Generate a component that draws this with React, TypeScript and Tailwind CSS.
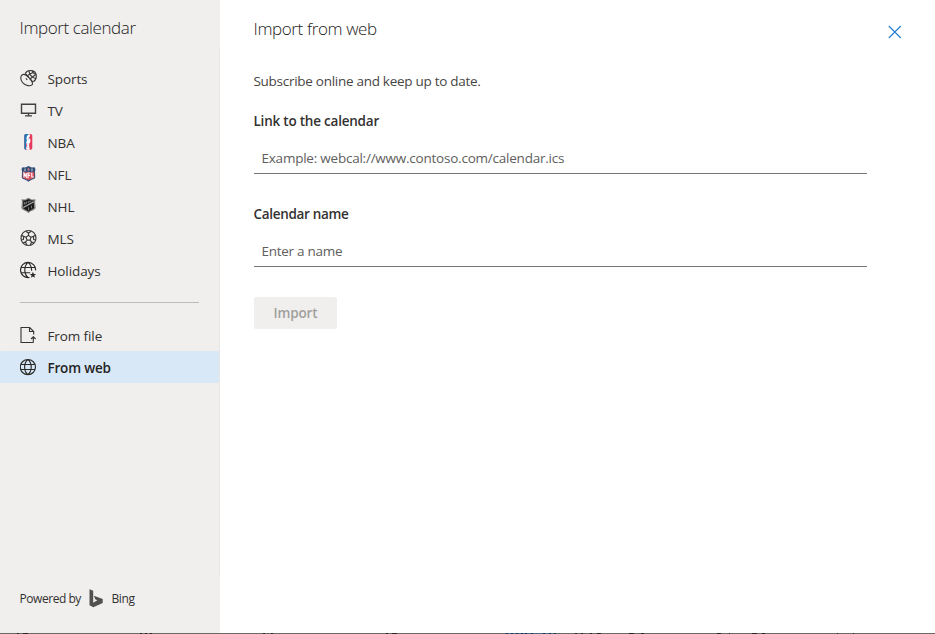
import React from "react";

const stroke = { fill: "none", stroke: "#3b3a37", strokeWidth: 1.15 };

const Svg = ({ children }: { children: React.ReactNode }) => (
  <svg width="18" height="18" viewBox="0 0 18 18" className="block shrink-0">{children}</svg>
);

const SportsIcon = () => (
  <Svg>
    <g {...stroke}>
      <path d="M5.200 4.500C6.400 2.300 8.700 1.300 11 1.500c3.100.3 5.300 2.700 5.300 5.800 0 2.400-1 4.400-3 5.500" />
      <path d="M1.800 6.200C3.500 4.800 6.500 6 9 8.700s4.200 5.900 3 7.200c-1.900 1.500-6.200.9-8.900-1.800S.2 7.900 1.800 6.200z" />
      <path d="M5.200 4.500l3.600 4M12.800 12.800L9.500 9.300M7.200 6.700l7.400-4.200M10 10l6-4.800M9 1.700c.2 3.300 3 6.700 6.800 8M12 1.700c.3 1.500 1.500 2.900 3.700 3.600M5.900 9.400l1.300 1.400" />
    </g>
  </Svg>
);

const TvIcon = () => (
  <Svg>
    <g fill="none" stroke="#44423f" strokeWidth="1.400">
      <path d="M1.500 3.200h14v9h-14zM8.500 12.200v2.600M5 14.900h7" />
    </g>
  </Svg>
);

const NbaIcon = () => (
  <Svg>
    <rect x="4.300" y="1" width="8" height="15.700" rx="1.700" fill="#e63a5c" />
    <path d="M6 1h3L7.500 4l.5 4-2 3 .5 5.700H6a1.700 1.700 0 0 1-1.700-1.700V2.700C4.300 1.700 5 1 6 1z" fill="#2378b5" />
    <path d="M9 1l1.200.9-.7 2-1 1.200 1.800.8v3l-1 1.600-.2 2 .6 4.300H6.900l-.8-1 .8-3.500-.7-3.500L7 7.600l-.6-1.800L7 3z" fill="#fff" />
    <path d="M8.700 4.500l-1 3M8 10l-.4 5" stroke="#a8c7dd" strokeWidth=".6" />
  </Svg>
);

const NflIcon = () => (
  <Svg>
    <path d="M2.500 2.200l2.800.4L8.500.9l3.200 1.700 2.800-.4 1 1.900-.5 2.200.2 6.300c0 1.500-3.900 2-6.700 4.100-2.800-2.100-6.700-2.600-6.700-4.100L2 6.300l-.5-2.200z" fill="#344d76" />
    <path d="M2.800 7.200h11.400v5c-.8 1.300-4 1.600-5.700 3.100-1.700-1.500-4.900-1.800-5.700-3.100z" fill="#dc5060" />
    <path d="M4 12.500V8.200l2.300 3.600V8M8 13.300V8h2.300M8 10.400h2M11.800 7.800v4.200h2" fill="none" stroke="#fff" strokeWidth="1.100" />
    <path d="M8.500 2.500l1 1.300.2 1.500-1.200 1-1.200-1 .2-1.500z" fill="#b07580" />
    <path d="M4 4.200h2M4 5.800h2M11 4.200h2M11 5.800h2" stroke="#d7dce6" strokeWidth=".9" strokeDasharray=".8 .5" />
  </Svg>
);

const NhlIcon = () => (
  <Svg>
    <path d="M1.500 2.200l3.500.2L8.500.8 12 2.400l3.500-.2-.4 3.100.6 5.500c-.2 2.300-5 2.900-7.200 5.500-2.200-2.600-7-3.200-7.200-5.500l.6-5.500z" fill="#858585" />
    <path d="M3 3.400l2.400.1 3.100-1.400 3.100 1.400 2.500-.1-.4 2 .4 5c-.2 1.500-3.700 2.300-5.600 4.200-1.900-1.900-5.400-2.700-5.600-4.200l.4-5z" fill="#1b1b1b" />
    <path d="M3.300 10.500l10.500-5.700" stroke="#b3b3b3" strokeWidth="1.200" />
    <path d="M4.600 5v2.700M4.600 6.500l1.700-.7M6.500 4.500v2.200M8.300 4v2M8.300 5.200l1.800-.7M10.300 3.500V5M8.600 10.200v3M11.500 8.500v2.800" stroke="#999" strokeWidth=".7" />
  </Svg>
);

const MlsIcon = () => (
  <Svg>
    <g {...stroke}>
      <circle cx="8.500" cy="9" r="7.500" />
      <path d="M8.500 6.400l2.500 1.800-.9 2.900H7L6 8.200zM8.500 6.400V4M11 8.200l2.400-.8M10.100 11.100l1.500 2.100M7 11.100l-1.500 2.100M6 8.200l-2.400-.8" />
      <path d="M5.700 2.300L8.500 4l2.800-1.700M15.500 6.300l-2.100 1.100.3 3.200 2.300.5M13.800 13.600l-2.200-.4-1.500 3M7 16.200l-1.500-3-2.300.4M1.100 11l2.300-.5.200-3.100-2.100-1.100" />
    </g>
  </Svg>
);

const GlobeIcon = ({ star = false }: { star?: boolean }) => (
  <Svg>
    <g fill="none" stroke="#292928" strokeWidth="1.150">
      {star ? (
        <path d="M9.500 16.500C4.500 17.200.5 13.500.5 9a7.600 7.600 0 0 1 7.600-7.600c4.500 0 7.900 3.700 7.500 8M8.100 1.400C3.700 5 3.700 13 8.100 16.600M8.100 1.400c2.500 2.200 3.600 5 3.500 8.400M1.200 6.500h13.900M1.200 11.700h9" />
      ) : (
        <path d="M7.900 1.500a7.600 7.600 0 1 0 0 15.200 7.600 7.600 0 0 0 0-15.200zM7.900 1.500c-4.400 3.500-4.400 11.700 0 15.200M7.900 1.500c4.400 3.500 4.400 11.700 0 15.200M1 6.500h13.800M1 11.500h13.800" />
      )}
    </g>
    {star && <path d="M12.900 10.800l.9 2.100 2.300.1-1.800 1.500.7 2.200-2.100-1.200-2 1.200.7-2.200-1.900-1.500 2.300-.1z" fill="#292928" />}
  </Svg>
);

const FileIcon = () => (
  <Svg>
    <g fill="none" stroke="#353431" strokeWidth="1.100">
      <path d="M10 16.500H1V1.500h8.700l4 4v3M9.500 1.500v4h4.200M13.300 16.500v-5.700M11 13l2.300-2.300 2.300 2.300M9.500 16.500h4" />
    </g>
  </Svg>
);

const leagues = [
  { name: "Sports", icon: <SportsIcon /> },
  { name: "TV", icon: <TvIcon /> },
  { name: "NBA", icon: <NbaIcon /> },
  { name: "NFL", icon: <NflIcon /> },
  { name: "NHL", icon: <NhlIcon /> },
  { name: "MLS", icon: <MlsIcon /> },
  { name: "Holidays", icon: <GlobeIcon star /> },
];

const Row = ({ name, icon, selected = false }: { name: string; icon: React.ReactNode; selected?: boolean }) => (
  <button className={`flex h-8 w-full items-center rounded-[2px] pl-[19.500px] text-left ${selected ? "bg-[#d9e8f7] font-semibold tracking-[-0.200px] text-[#242424]" : "tracking-[-0.100px] text-[#323130]"}`}>
    <span className="-mt-[2px]">{icon}</span>
    <span className="ml-[10px] text-[13.500px] leading-5 whitespace-nowrap">{name}</span>
  </button>
);

const marks = [[17, 2], [23, 5], [140, 2], [145, 2], [150, 2], [263, 2], [271, 2], [386, 2], [392, 5], [575, 2], [581, 2], [590, 2], [597, 4], [629, 5], [641, 3], [717, 4], [729, 1], [752, 5], [762, 3], [837, 1], [853, 1]];
const blueMarks = [506, 511, 516, 521, 525, 531, 543, 549, 554];

export default function App() {
  return (
    <div className="flex h-[634px] w-[935px] flex-col overflow-hidden bg-white font-['Open_Sans','Noto_Sans',sans-serif] text-[#323130]">
      <div className="flex h-[633px]">
        <aside className="flex w-[220px] shrink-0 flex-col bg-[#f0efee]">
          <h1 className="mt-4 h-6 pl-[19.500px] text-[17px] leading-6 font-light tracking-[-0.400px] text-[#1c1b1a]">Import calendar</h1>
          <div className="mt-2 flex h-[528px] flex-col border-r border-[#e6e5e4] pt-[15px]">
            <nav>
              {leagues.map((l) => <Row key={l.name} {...l} />)}
            </nav>
            <div className="mt-[15px] mr-5 ml-5 h-px shrink-0 bg-[#bdbcbb]" />
            <nav className="mt-4 *:pt-px">
              <Row name="From file" icon={<FileIcon />} />
              <Row name="From web" icon={<GlobeIcon />} selected />
            </nav>
          </div>
          <div className="mt-[13px] flex h-5 items-center pl-[19.500px] text-[12px]">
            <span className="leading-5 tracking-[-0.450px]">Powered by</span>
            <svg className="ml-[8.500px] block" width="14" height="20" viewBox="0 0 14 20">
              <path d="M.5.200l3.700 1.500v12l4.200-2.400-2.200-1-1.300-3.500 8.800 3.200v4L4.300 18.300.5 16.200z" fill="#50504e" />
            </svg>
            <span className="ml-[8px] leading-5 tracking-[-0.400px]">Bing</span>
          </div>
        </aside>
        <main className="flex-1 pl-[34px]">
          <header className="flex h-[71px] justify-between">
            <h2 className="mt-[17px] -ml-[.5px] text-[17px] leading-6 font-light tracking-[-0.380px] text-[#1c1b1a]">Import from web</h2>
            <button aria-label="Close" className="mt-[25px] mr-[33px] h-[14px] w-[14px]">
              <svg width="14" height="14" viewBox="0 0 14 14"><path d="M.8 1l12 12M12.800 1l-12 12" stroke="#2680cf" strokeWidth="1.150" /></svg>
            </button>
          </header>
          <p className="-ml-[.5px] h-5 text-[13.500px] leading-5 tracking-[-0.280px] text-[#484644]">Subscribe online and keep up to date.</p>
          <form className="w-[613px]">
            <label className="mt-5 -ml-[.5px] block h-5 text-[13.500px] leading-5 font-semibold tracking-[-0.220px]">Link to the calendar</label>
            <div className="mt-[12px] flex h-[31px] items-center border-b border-[#767574] pl-[7.500px] text-[13.500px] tracking-[-0.230px] text-[#605e5c]">Example: webcal://www.contoso.com/calendar.ics</div>
            <label className="mt-[30px] -ml-[.5px] block h-5 text-[13.500px] leading-5 font-semibold tracking-[-0.320px]">Calendar name</label>
            <div className="mt-[12px] flex h-[31px] items-center border-b border-[#767574] pl-[7.500px] text-[13.500px] tracking-[-0.280px] text-[#605e5c]">Enter a name</div>
            <button type="button" className="mt-[30px] h-8 w-[83px] rounded-[2px] bg-[#f0efee] text-[13.500px] font-semibold tracking-[-0.150px] text-[#a19f9d]">Import</button>
          </form>
        </main>
      </div>
      <svg className="block" width="935" height="1">
        <rect width="935" height="1" fill="#6b6968" />
        {marks.map(([x, w]) => <rect key={x} x={x} width={w} height="1" fill="#2b2525" />)}
        <rect x="506" width="50" height="1" fill="#52677d" />
        {blueMarks.map((x) => <rect key={x} x={x} width="2" height="1" fill="#12375f" />)}
      </svg>
    </div>
  );
}
